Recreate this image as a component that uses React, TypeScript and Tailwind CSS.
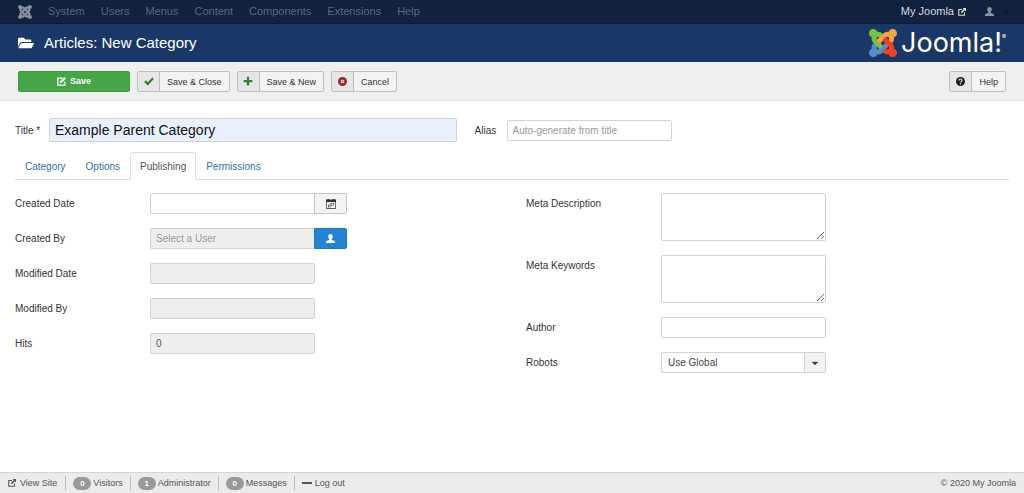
import { useState } from 'react';
import type { ReactNode } from 'react';
import { FaCaretDown, FaFolderOpen } from 'react-icons/fa';

const menuItems = ['System', 'Users', 'Menus', 'Content', 'Components', 'Extensions', 'Help'];

const tabs = ['Category', 'Options', 'Publishing', 'Permissions'];

const counters = [
  { label: 'Visitors', count: 0 },
  { label: 'Administrator', count: 1 },
  { label: 'Messages', count: 0 },
];

const inputClass =
  'h-[21px] w-[165px] border border-[#d2d2d2] rounded-[2px] bg-white px-[5px] text-[10px] text-[#555] placeholder:text-[#999] outline-none';
const disabledClass =
  'h-[21px] w-[165px] border border-[#d2d2d2] rounded-[2px] bg-[#eee] px-[5px] text-[10px] text-[#555] placeholder:text-[#999] outline-none';
const textareaClass =
  'block h-12 w-[165px] border border-[#d2d2d2] rounded-[2px] bg-white px-[5px] text-[10px] text-[#555] outline-none resize';

// the four arms of the mark, clockwise from bottom left
const armPaths = {
  blue: 'M312.1 307.6l-44-44.3c-87 86.4-50.4 50.4-99.7 99.8-14.3 14.3-37.6 14.3-51.9 0-13.1-13.4-16.9-35.3 3.2-55.4l-44-44.3c-30.2 30.2-38 65.2-29.5 98.3-26.7 6-46.2 29.9-46.2 58.2C0 453.2 26.8 480 59.8 480c28.6 0 52.5-19.8 58.6-46.7 32.7 8.2 68.5-.6 94.2-26 32.1-32 12.2-12.4 99.5-99.7z',
  green:
    'M.6 92.1C.6 58.8 27.4 32 60.4 32c30 0 54.5 21.9 59.2 50.2 32.6-7.6 67.1.6 96.5 30l-44.3 44.3c-20.5-20.5-42.6-16.3-55.4-3.5-14.3 14.3-14.3 37.9 0 52.2l99.5 99.5-44 44.3c-87.7-87.2-49.7-49.7-99.8-99.7-26.8-26.5-35-64.8-24.8-98.9C20.4 144.6.6 120.7.6 92.1z',
  orange:
    'M130.1 208.5l44.3 44.3c10-10 89.7-89.7 99.7-99.8 14.3-14.3 37.6-14.3 51.9 0 12.8 12.8 17 35-3.5 55.4l44 44.3c31.2-31.2 38.5-67.6 28.9-101.2 29.2-4.1 51.9-29.2 51.9-59.5 0-33.2-26.8-60.1-59.8-60.1-30.3 0-55.4 22.5-59.5 51.6-33.8-9.9-71.7-1.5-98.3 25.1-18.3 19.1-71.1 71.5-99.6 99.9z',
  red: 'M396.4 360.7c8.2-32.7-.9-68.5-26.3-93.9-11.8-12.2 5 4.7-99.5-99.7l-44.3 44.3 99.7 99.7c14.3 14.3 14.3 37.6 0 51.9-12.8 12.8-35 17-55.4-3.5l-44 44.3c27.6 30.2 68 38.8 102.7 28 5.5 27.4 29.7 48.1 58.9 48.1 33 0 59.8-26.8 59.8-60.1 0-30.2-22.5-55-51.6-59.1z',
};

interface IconProps {
  className?: string;
}

function JoomlaIcon({ className }: IconProps) {
  return (
    <svg viewBox="-10 22 468 468" fill="currentColor" stroke="currentColor" strokeWidth="20" className={className} aria-hidden="true">
      <path d={armPaths.blue} />
      <path d={armPaths.green} />
      <path d={armPaths.orange} />
      <path d={armPaths.red} />
    </svg>
  );
}

function UserIcon({ className }: IconProps) {
  return (
    <svg viewBox="0 0 16 16" fill="currentColor" className={className} aria-hidden="true">
      <path d="M8 0c2.6 0 4 1.7 4 4.2 0 2.2-.8 3.9-2 4.8v1.6c3 .6 6 1.6 6 3.6V16H0v-1.8c0-2 3-3 6-3.6V9C4.800 8.100 4 6.400 4 4.200 4 1.700 5.400 0 8 0z" />
    </svg>
  );
}

function ExternalIcon({ className }: IconProps) {
  return (
    <svg viewBox="0 0 16 16" className={className} aria-hidden="true">
      <path d="M8 3H1.500v11.500H13V9" fill="none" stroke="currentColor" strokeWidth="2.200" />
      <path d="M9 0h7v7l-2.400-2.400-5.800 5.800-2.200-2.200 5.800-5.800z" fill="currentColor" />
    </svg>
  );
}

function EditIcon({ className }: IconProps) {
  return (
    <svg viewBox="0 0 16 16" className={className} aria-hidden="true">
      <path d="M10 2.200H1.500v12.300H14V8" fill="none" stroke="currentColor" strokeWidth="2.200" />
      <path d="M13.200 0L16 2.800 8.400 10.400 4.800 11.300 5.600 7.600z" fill="currentColor" />
    </svg>
  );
}

function CheckIcon({ className }: IconProps) {
  return (
    <svg viewBox="0 0 16 16" className={className} aria-hidden="true">
      <path d="M1.500 8.200L6 12.500 14.500 3.500" fill="none" stroke="currentColor" strokeWidth="3.600" />
    </svg>
  );
}

function PlusIcon({ className }: IconProps) {
  return (
    <svg viewBox="0 0 16 16" className={className} aria-hidden="true">
      <path d="M8 1v14M1 8h14" fill="none" stroke="currentColor" strokeWidth="3.600" />
    </svg>
  );
}

function CancelIcon({ className }: IconProps) {
  return (
    <svg viewBox="0 0 16 16" className={className} aria-hidden="true">
      <circle cx="8" cy="8" r="8" fill="currentColor" />
      <path d="M5 5l6 6M11 5l-6 6" stroke="#e6e6e6" strokeWidth="2" />
    </svg>
  );
}

function HelpIcon({ className }: IconProps) {
  return (
    <svg viewBox="0 0 16 16" className={className} aria-hidden="true">
      <circle cx="8" cy="8" r="8" fill="currentColor" />
      <path d="M5.300 6.200c0-3.600 5.400-3.400 5.400-.3 0 1.900-2.600 1.800-2.600 4M8 11.300v2" fill="none" stroke="#e6e6e6" strokeWidth="2" />
    </svg>
  );
}

function MinusIcon({ className }: IconProps) {
  return (
    <svg viewBox="0 0 10 10" className={className} aria-hidden="true">
      <path d="M0 4h10v2H0z" fill="currentColor" />
    </svg>
  );
}

function CalendarIcon({ className }: IconProps) {
  return (
    <svg viewBox="0 0 20 20" className={className} aria-hidden="true">
      <path fill="currentColor" d="M0 1h3V0h3v1h8V0h3v1h3v5H0z" />
      <path fill="none" stroke="currentColor" strokeWidth="1.600" d="M.8 6v13h18.400V6" />
      <path
        fill="currentColor"
        d="M8 8.500h2v2H8zM11 8.500h2v2h-2zM14 8.500h2v2h-2zM4 11.500h2v2H4zM7 11.500h2v2H7zM10 11.500h2v2h-2zM13 11.500h2v2h-2zM4 14.500h2v2H4zM7 14.500h2v2H7z"
      />
    </svg>
  );
}

function JoomlaLogo() {
  return (
    <div className="flex items-center gap-1 text-white">
      <svg viewBox="-10 22 468 468" strokeWidth="20" className="w-7 h-7" aria-hidden="true">
        <path d={armPaths.blue} fill="#5091cd" stroke="#5091cd" />
        <path d={armPaths.green} fill="#7ac143" stroke="#7ac143" />
        <path d={armPaths.orange} fill="#f9a541" stroke="#f9a541" />
        <path d={armPaths.red} fill="#f44321" stroke="#f44321" />
      </svg>
      <span className="flex items-start font-['Inter',sans-serif] font-normal text-[27px] leading-7">
        Joomla!<sup className="text-[6px] leading-4 top-0">®</sup>
      </span>
    </div>
  );
}

function ToolbarButton({ icon, children }: { icon: ReactNode; children: ReactNode }) {
  return (
    <button
      type="button"
      className="flex h-[21px] items-stretch border border-[#bfbfbf] rounded-[2px] bg-[#f3f3f3] text-[9px] leading-[19px] text-[#333] overflow-hidden"
    >
      <span className="flex w-[22px] items-center justify-center bg-[#e6e6e6] border-r border-[#bfbfbf]">
        {icon}
      </span>
      <span className="px-[7px] pt-px">{children}</span>
    </button>
  );
}

function Field({ id, label, children }: { id: string; label: string; children: ReactNode }) {
  return (
    <div className="flex items-start">
      <label htmlFor={id} className="w-[135px] shrink-0 leading-[21px]">
        {label}
      </label>
      <div className="flex">{children}</div>
    </div>
  );
}

export default function App() {
  const [activeTab, setActiveTab] = useState('Publishing');

  return (
    <div className="min-h-screen flex flex-col bg-white font-['Liberation_Sans',Arial,sans-serif] text-[10px] text-[#333]">
      <nav className="flex h-6 items-center justify-between bg-[#10223e] border-b border-[#0d1a30] pl-[18px] pr-[14px] text-[11px]">
        <div className="flex items-center gap-4 text-[#5b687d]">
          <a href="#" aria-label="Control panel" className="text-[#8b94a3]">
            <JoomlaIcon className="w-[14px] h-[14px]" />
          </a>
          {menuItems.map((item) => (
            <a key={item} href="#">
              {item}
            </a>
          ))}
        </div>
        <div className="flex items-center">
          <a href="#" className="flex items-center gap-1 text-[#d9d9d9]">
            My Joomla
            <ExternalIcon className="w-2 h-2" />
          </a>
          <button type="button" aria-label="User menu" className="flex items-center gap-2 ml-[19px] text-[#8b94a3]">
            <UserIcon className="w-[9px] h-[9px]" />
            <FaCaretDown className="w-2 h-2 text-[#0b182c]" />
          </button>
        </div>
      </nav>

      <header className="flex h-[38px] items-center justify-between bg-[#1a3867] pl-[18px] pr-[18px] text-white">
        <h1 className="flex items-center gap-[10px] text-[15px]">
          <FaFolderOpen className="w-4 h-4" />
          Articles: New Category
        </h1>
        <JoomlaLogo />
      </header>

      <div className="flex h-[39px] items-center gap-[7px] bg-[#efefef] border-b border-[#e3e3e3] px-[18px]">
        <button
          type="button"
          className="flex h-[21px] w-28 items-center justify-center gap-1 rounded-[2px] border border-[#409740] bg-[#46a546] text-[9px] leading-[19px] font-bold text-white"
        >
          <EditIcon className="w-[9px] h-[9px]" />
          <span className="pt-px">Save</span>
        </button>
        <ToolbarButton icon={<CheckIcon className="w-[10px] h-[10px] text-[#378137]" />}>Save &amp; Close</ToolbarButton>
        <ToolbarButton icon={<PlusIcon className="w-[10px] h-[10px] text-[#378137]" />}>Save &amp; New</ToolbarButton>
        <ToolbarButton icon={<CancelIcon className="w-[9px] h-[9px] text-[#942a25]" />}>Cancel</ToolbarButton>
        <div className="ml-auto">
          <ToolbarButton icon={<HelpIcon className="w-[9px] h-[9px] text-[#222]" />}>Help</ToolbarButton>
        </div>
      </div>

      <main className="flex-1 px-[15px] pt-[17px]">
        <div className="flex items-center">
          <label htmlFor="title" className="w-[34px] shrink-0">
            Title <span aria-hidden="true">*</span>
          </label>
          <input
            id="title"
            type="text"
            defaultValue="Example Parent Category"
            className="h-6 w-[41%] border border-[#d2d2d2] rounded-[2px] bg-[#e8f0fe] px-[5px] text-[14px] text-[#111] outline-none"
          />
          <label htmlFor="alias" className="ml-[18px] w-8 shrink-0">
            Alias
          </label>
          <input id="alias" type="text" placeholder="Auto-generate from title" className={inputClass} />
        </div>

        <div role="tablist" className="mt-[10px] flex h-7 items-stretch border-b border-[#ddd]">
          {tabs.map((tab) => (
            <button
              key={tab}
              type="button"
              role="tab"
              aria-selected={tab === activeTab}
              onClick={() => setActiveTab(tab)}
              className={
                tab === activeTab
                  ? '-mb-px border border-[#ddd] border-b-white rounded-t-[3px] bg-white px-[9px] text-[#555]'
                  : '-mb-px border border-transparent px-[9px] text-[#3071a9]'
              }
            >
              {tab}
            </button>
          ))}
        </div>

        <div className="mt-[13px] grid grid-cols-2 gap-x-7">
          <div className="flex flex-col gap-[14px]">
            <Field id="created" label="Created Date">
              <input id="created" type="text" className={`${inputClass} rounded-r-none`} />
              <button
                type="button"
                aria-label="Open the calendar"
                className="-ml-px flex w-[33px] items-center justify-center border border-[#c4c4c4] rounded-r-[2px] bg-[#f3f3f3] text-[#333]"
              >
                <CalendarIcon className="w-[10px] h-[10px]" />
              </button>
            </Field>
            <Field id="created-by" label="Created By">
              <input
                id="created-by"
                type="text"
                readOnly
                placeholder="Select a User"
                className={`${disabledClass} rounded-r-none`}
              />
              <button
                type="button"
                aria-label="Select User"
                className="-ml-px flex w-[33px] items-center justify-center border border-[#1f7bc6] rounded-r-[2px] bg-[#2384d3] text-white"
              >
                <UserIcon className="w-[9px] h-[9px]" />
              </button>
            </Field>
            <Field id="modified" label="Modified Date">
              <input id="modified" type="text" readOnly className={disabledClass} />
            </Field>
            <Field id="modified-by" label="Modified By">
              <input id="modified-by" type="text" readOnly className={disabledClass} />
            </Field>
            <Field id="hits" label="Hits">
              <input id="hits" type="text" readOnly value="0" className={disabledClass} />
            </Field>
          </div>

          <div className="flex flex-col gap-[14px]">
            <Field id="metadesc" label="Meta Description">
              <textarea id="metadesc" className={textareaClass} />
            </Field>
            <Field id="metakey" label="Meta Keywords">
              <textarea id="metakey" className={textareaClass} />
            </Field>
            <Field id="author" label="Author">
              <input id="author" type="text" className={inputClass} />
            </Field>
            <Field id="robots" label="Robots">
              <div className="relative">
                <select
                  id="robots"
                  className="block h-[21px] w-[165px] appearance-none border border-[#d2d2d2] rounded-[2px] bg-white px-[6px] text-[10px] text-[#444] outline-none"
                >
                  <option>Use Global</option>
                  <option>index, follow</option>
                  <option>noindex, follow</option>
                  <option>index, nofollow</option>
                  <option>noindex, nofollow</option>
                </select>
                <span className="pointer-events-none absolute inset-y-px right-px flex w-[21px] items-center justify-center border-l border-[#d2d2d2] bg-[#f3f3f3]">
                  <FaCaretDown className="w-[10px] h-[10px] text-[#444]" />
                </span>
              </div>
            </Field>
          </div>
        </div>
      </main>

      <footer className="flex h-[21px] items-center justify-between border-t border-[#d4d4d4] bg-[#ebebeb] px-2 text-[9px] leading-[13px] text-[#555]">
        <div className="flex items-center divide-x divide-[#bbb]">
          <a href="#" className="flex items-center gap-1 pr-2">
            <ExternalIcon className="w-2 h-2" />
            <span className="pt-px">View Site</span>
          </a>
          {counters.map((counter) => (
            <span key={counter.label} className="flex items-center gap-[2px] px-[7px]">
              <span className="flex h-[13px] w-[18px] items-center justify-center rounded-full bg-[#999] text-[8px] font-bold text-white">
                {counter.count}
              </span>
              <span className="pt-px">{counter.label}</span>
            </span>
          ))}
          <a href="#" className="flex items-center gap-[3px] pl-[7px]">
            <MinusIcon className="w-[10px] h-[10px]" />
            <span className="pt-px">Log out</span>
          </a>
        </div>
        <span className="pt-px">© 2020 My Joomla</span>
      </footer>
    </div>
  );
}
